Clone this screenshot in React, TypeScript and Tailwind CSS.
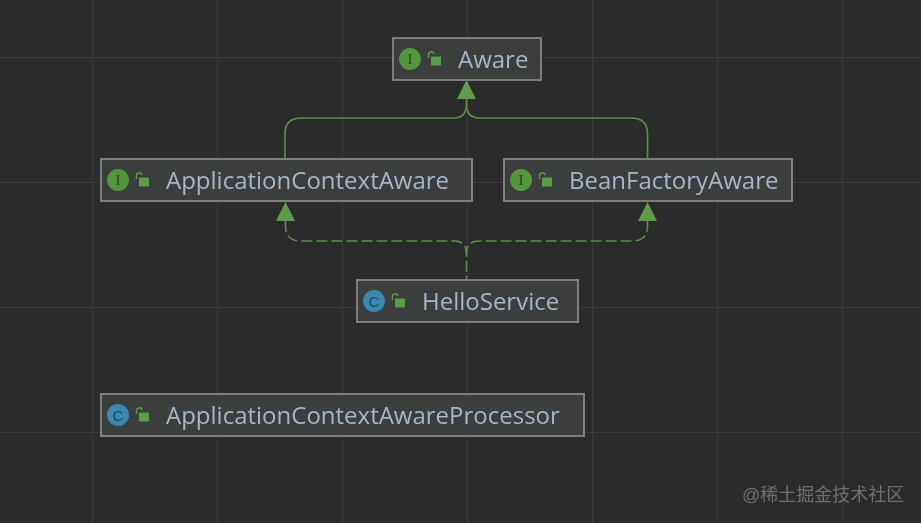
const gridX = [92.5, 217.5, 342.5, 467.5, 592.5, 717.5, 842.5];
const gridY = [57.5, 182.5, 307.5, 432.5];

function InterfaceIcon() {
  return (
    <span className="flex h-[22px] w-[22px] items-center justify-center rounded-full bg-[#55953c] font-['Liberation_Serif',serif] text-[15px] leading-none text-[#28451f]">
      I
    </span>
  );
}

function ClassIcon() {
  return (
    <span className="flex h-[22px] w-[22px] items-center justify-center rounded-full bg-[#3a88ad] font-['Liberation_Sans',sans-serif] text-[15px] leading-none text-[#1b4a68]">
      C
    </span>
  );
}

function LockIcon() {
  return (
    <svg width="16" height="16" viewBox="0 0 16 16" className="ml-[5px]">
      <path d="M2.500 7V4a2.800 2.800 0 0 1 5.500 -1" fill="none" stroke="#5c9e45" strokeWidth="1.5" />
      <rect x="5" y="5.500" width="10" height="9" fill="#5c9e45" />
    </svg>
  );
}

function Node({ kind, label, className }: { kind: "i" | "c"; label: string; className: string }) {
  return (
    <div className={`absolute flex h-[44px] items-center border-2 border-[#7d7e7d] bg-[#3c3d3d] pl-[5px] ${className}`}>
      {kind === "i" ? <InterfaceIcon /> : <ClassIcon />}
      <LockIcon />
      <span className="ml-[16px] whitespace-nowrap text-[24px] leading-none text-[#a7b5c9]">{label}</span>
    </div>
  );
}

function Edges() {
  return (
    <svg width="921" height="523" className="absolute left-0 top-0">
      {gridX.map((x) => (
        <line key={x} x1={x} y1="0" x2={x} y2="523" stroke="#3a3a3a" />
      ))}
      {gridY.map((y) => (
        <line key={y} x1="0" y1={y} x2="921" y2={y} stroke="#3a3a3a" />
      ))}
      <g fill="none" stroke="#5a9249" strokeWidth="1.6">
        <path d="M285 158V134Q285 118 301 118H454Q466.500 118 466.500 104V98" />
        <path d="M647.500 158V134Q647.500 118 631 118H479Q466.500 118 466.500 104" />
        <g strokeDasharray="11 4">
          <path d="M285.500 221V226Q285.500 241 301 241H454Q466.500 241 466.500 253V279" />
          <path d="M647.500 221V226Q647.500 241 632 241H479Q466.500 241 466.500 253" />
        </g>
      </g>
      <g fill="#5f9b4c">
        <polygon points="466.500,80 457,99 476,99" />
        <polygon points="285.500,202 276,221 295,221" />
        <polygon points="647.500,202 638,221 657,221" />
      </g>
    </svg>
  );
}

export default function App() {
  return (
    <div className="relative h-[523px] w-[921px] overflow-hidden bg-[#2b2b2b] font-['Open_Sans',sans-serif] blur-[0.4px]">
      <Edges />
      <Node kind="i" label="Aware" className="left-[392px] top-[37px] w-[150px]" />
      <Node kind="i" label="ApplicationContextAware" className="left-[100px] top-[158px] w-[373px]" />
      <Node kind="i" label="BeanFactoryAware" className="left-[503px] top-[158px] w-[290px]" />
      <Node kind="c" label="HelloService" className="left-[356px] top-[279px] w-[223px]" />
      <Node kind="c" label="ApplicationContextAwareProcessor" className="left-[100px] top-[393px] w-[485px]" />
      <div className="absolute left-[742px] top-[484px] whitespace-nowrap font-['Liberation_Sans','Noto_Sans_CJK_SC',sans-serif] text-[18px] leading-[22px] text-[#6f6f6f]">
        @稀土掘金技术社区
      </div>
    </div>
  );
}
